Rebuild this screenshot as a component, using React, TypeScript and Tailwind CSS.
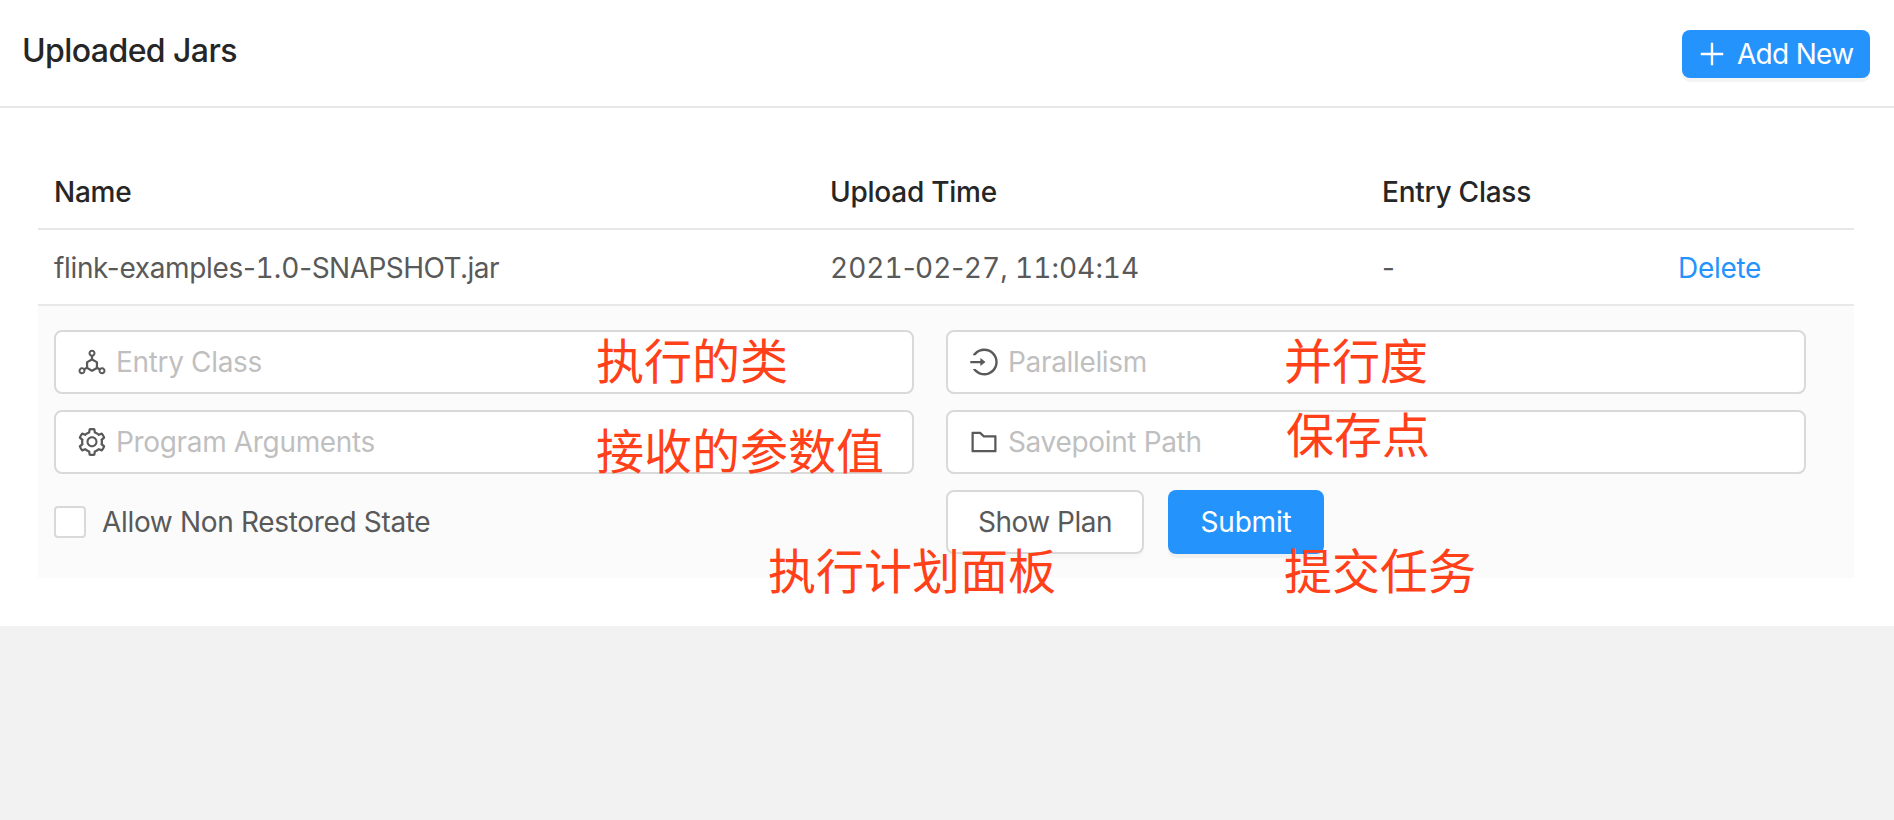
import type { ReactNode } from "react";
import {
  AiOutlineDeploymentUnit,
  AiOutlineFolder,
  AiOutlineLogin,
  AiOutlinePlus,
  AiOutlineSetting,
} from "react-icons/ai";

function Field({ icon, label }: { icon: ReactNode; label: string }) {
  return (
    <div className="flex h-16 w-[860px] items-center rounded-lg border-2 border-[#d9d9d9] bg-white pl-5 text-[28px] text-[#595959]">
      {icon}
      <span className="ml-2 tracking-[-0.34px] text-[#bfbfbf]">{label}</span>
    </div>
  );
}

function Note({ className, children }: { className: string; children: string }) {
  return (
    <span
      className={
        "absolute whitespace-nowrap font-['Noto_Sans_CJK_SC',sans-serif] text-[48px] leading-[48px] font-normal text-[#ff4019] " +
        className
      }
    >
      {children}
    </span>
  );
}

function Digits({ children }: { children: string }) {
  return <span className="tracking-normal tabular-nums">{children}</span>;
}

export default function App() {
  return (
    <div className="relative h-[820px] w-[1894px] overflow-hidden bg-[#f2f2f2] font-['Inter',sans-serif] text-[28px] leading-[42px] text-[#595959]">
      <div className="h-[626px] bg-white">
        <header className="flex h-[108px] items-start justify-between border-b-2 border-[#e8e8e8] pr-6 pl-[22px]">
          <h1 className="pt-[27px] text-[32px] leading-[48px] font-medium tracking-[-0.58px] text-[#262626]">
            Uploaded Jars
          </h1>
          <button className="mt-[30px] flex h-12 w-[188px] items-center rounded-lg bg-[#2593fc] pl-3.5 text-white shadow-[0_4px_0_rgba(0,0,0,0.045)]">
            <AiOutlinePlus className="size-8" />
            <span className="ml-[9px] tracking-[-0.7px]">Add New</span>
          </button>
        </header>
        <main className="px-[38px] pt-[46px]">
          <div className="grid h-[76px] w-[1816px] grid-cols-[776px_552px_296px_1fr] items-center border-b-2 border-[#e8e8e8] pt-0.5 pl-4 font-medium tracking-[-0.25px] text-[#262626]">
            <div>Name</div>
            <div>Upload Time</div>
            <div>Entry Class</div>
          </div>
          <div className="grid h-[76px] w-[1816px] grid-cols-[776px_552px_296px_1fr] items-center border-b-2 border-[#e8e8e8] pt-0.5 pl-4">
            <div className="tracking-[-0.34px]">
              flink-examples-<Digits>1.0</Digits>
              <span className="tracking-[-0.54px]">-SNAPSHOT.jar</span>
            </div>
            <div className="tracking-[-0.5px]">
              <Digits>2021</Digits>-<Digits>02</Digits>-<Digits>27</Digits>, <Digits>11</Digits>:
              <Digits>04</Digits>:<Digits>14</Digits>
            </div>
            <div>-</div>
            <a className="tracking-[-0.3px] text-[#2593fc]">Delete</a>
          </div>
          <div className="h-[272px] w-[1816px] bg-[#fbfbfb] px-4 pt-6">
            <div className="grid grid-cols-[860px_860px] gap-x-8 gap-y-4">
              <Field icon={<AiOutlineDeploymentUnit className="size-8" />} label="Entry Class" />
              <Field icon={<AiOutlineLogin className="size-8" />} label="Parallelism" />
              <Field icon={<AiOutlineSetting className="size-8" />} label="Program Arguments" />
              <Field icon={<AiOutlineFolder className="size-8" />} label="Savepoint Path" />
              <label className="flex items-center">
                <span className="size-8 rounded-[4px] border-2 border-[#d9d9d9] bg-white" />
                <span className="ml-4 tracking-[-0.33px]">Allow Non Restored State</span>
              </label>
              <div className="flex gap-6">
                <button className="h-16 w-[198px] rounded-lg border-2 border-[#d9d9d9] bg-white tracking-[-0.5px] shadow-[0_4px_0_rgba(0,0,0,0.015)]">
                  Show Plan
                </button>
                <button className="h-16 w-[156px] rounded-lg bg-[#2593fc] tracking-[-0.2px] text-white shadow-[0_4px_0_rgba(0,0,0,0.045)]">
                  Submit
                </button>
              </div>
            </div>
          </div>
        </main>
      </div>
      <Note className="top-[334px] left-[596px]">执行的类</Note>
      <Note className="top-[424px] left-[596px]">接收的参数值</Note>
      <Note className="top-[334px] left-[1284px]">并行度</Note>
      <Note className="top-[408px] left-[1286px]">保存点</Note>
      <Note className="top-[544px] left-[768px]">执行计划面板</Note>
      <Note className="top-[544px] left-[1284px]">提交任务</Note>
    </div>
  );
}
